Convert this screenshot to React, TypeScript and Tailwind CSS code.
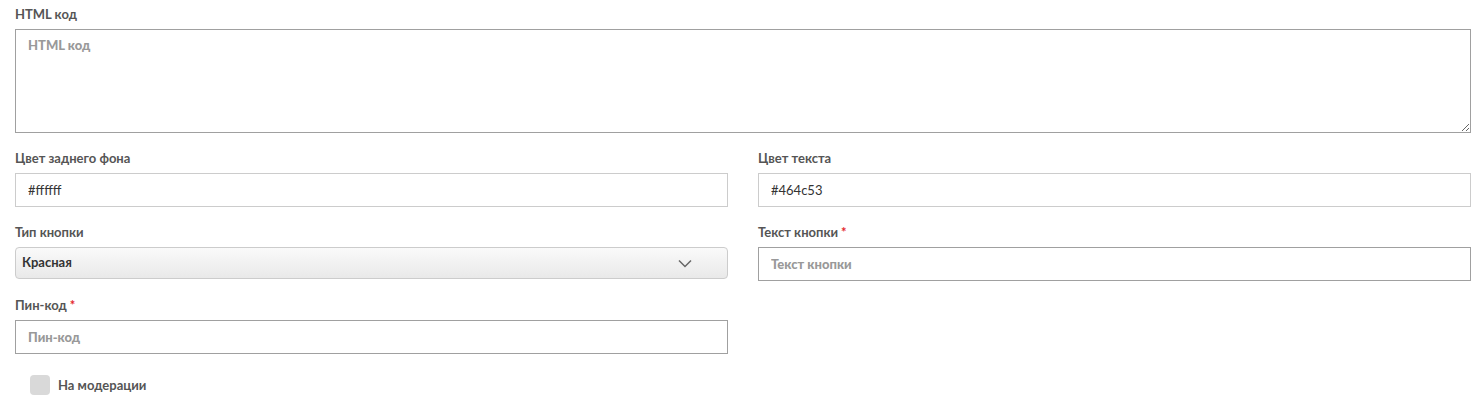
import React from "react";

const font = { fontFamily: "Lato, 'Noto Sans', sans-serif" };

function Label({ children, required }: { children: React.ReactNode; required?: boolean }) {
  return (
    <div className="mb-[6px] h-[18px] text-[13px] font-bold leading-[18px] text-[#555]">
      {children}
      {required && <span className="ml-[3px] text-[#e3262b]">*</span>}
    </div>
  );
}

export default function App() {
  return (
    <div className="bg-white px-[15px] pt-[5px] pr-[10px]" style={font}>
      <div className="mb-[16px]">
        <Label>HTML код</Label>
        <textarea
          className="block h-[104px] w-full resize-y border border-[#a0a0a0] bg-white px-[12px] py-[6px] text-[13px] font-black text-[#333] outline-none placeholder:font-black placeholder:text-[#999]"
          placeholder="HTML код"
          style={font}
        />
      </div>
      <div className="grid grid-cols-2 gap-x-[30px]">
        <div className="mb-[16px]">
          <Label>Цвет заднего фона</Label>
          <input
            className="block h-[34px] w-full border border-[#cccccc] px-[12px] text-[13px] text-[#333] outline-none"
            defaultValue="#ffffff"
            style={font}
          />
        </div>
        <div className="mb-[16px]">
          <Label>Цвет текста</Label>
          <input
            className="block h-[34px] w-full border border-[#cccccc] px-[12px] text-[13px] text-[#333] outline-none"
            defaultValue="#464c53"
            style={font}
          />
        </div>
        <div className="mb-[15px]">
          <Label>Тип кнопки</Label>
          <div className="flex h-[32px] w-full items-center justify-between rounded-[4px] border border-[#cccccc] bg-gradient-to-b from-[#fafafa] to-[#e9e9e9] pl-[6px] pr-[35px]">
            <span className="text-[13px] font-bold text-[#333]">Красная</span>
            <svg width="14" height="9" viewBox="0 0 14 9" fill="none">
              <path d="M1 1.5L7 7.5L13 1.5" stroke="#666" strokeWidth="1.5" />
            </svg>
          </div>
        </div>
        <div className="mb-[15px]">
          <Label required>Текст кнопки</Label>
          <input
            className="block h-[34px] w-full border border-[#a0a0a0] px-[12px] text-[13px] font-black text-[#333] outline-none placeholder:font-black placeholder:text-[#999]"
            placeholder="Текст кнопки"
            style={font}
          />
        </div>
        <div>
          <Label required>Пин-код</Label>
          <input
            className="block h-[34px] w-full border border-[#a0a0a0] px-[12px] text-[13px] font-black text-[#333] outline-none placeholder:font-black placeholder:text-[#999]"
            placeholder="Пин-код"
            style={font}
          />
        </div>
        <div />
      </div>
      <div className="mt-[21px] flex items-center pl-[15px]">
        <span className="h-[20px] w-[20px] rounded-[4px] bg-[#d9d9d9]" />
        <span className="ml-[8px] text-[13px] font-bold leading-[20px] text-[#555]">На модерации</span>
      </div>
    </div>
  );
}
